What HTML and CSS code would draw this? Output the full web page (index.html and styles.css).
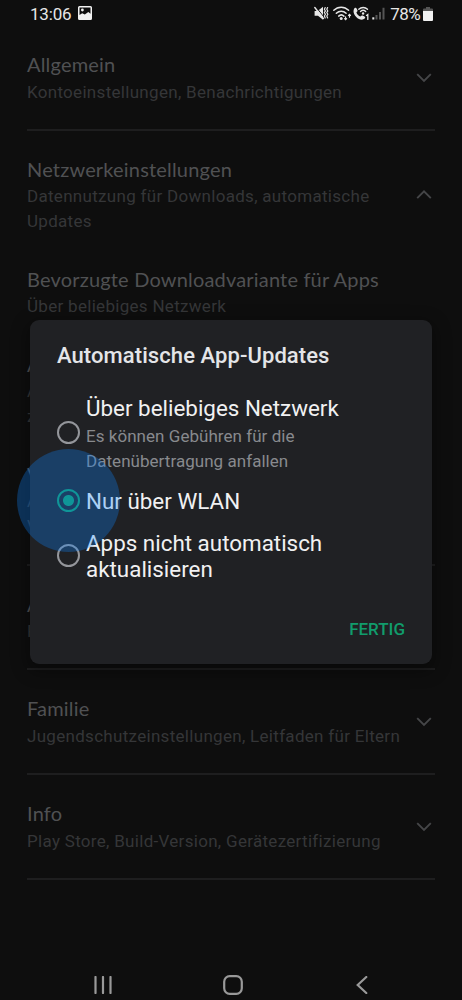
FILE: index.html
```html
<!DOCTYPE html>
<html lang="de">
<head>
<meta charset="utf-8">
<title>Einstellungen</title>
<link rel="stylesheet" href="styles.css">
</head>
<body>
<div class="screen">
  <header class="status">
    <div class="status-left">
      <span class="clock">13:06</span>
      <svg class="shot" width="14" height="14" viewBox="0 0 14 14"><path fill="#f1f1f1" fill-rule="evenodd" d="M1.500 0h11A1.500 1.500 0 0 1 14 1.500v11a1.500 1.500 0 0 1-1.500 1.500h-11A1.500 1.500 0 0 1 0 12.500v-11A1.500 1.500 0 0 1 1.500 0zM1.500 1.500V9l2.700-1.800 2.600 1.300L10.300 6l2.200 1.800V1.500z"/><circle cx="4.400" cy="4" r="1.400" fill="#f1f1f1"/></svg>
    </div>
    <div class="status-right">
      <svg class="status-icons" width="72" height="16" viewBox="0 0 72 16" fill="none" stroke="#e6e6e6" stroke-linecap="round">
        <path d="M.6 5h3L9 .8v13L4 9.800H.6z" fill="#e6e6e6" stroke="none"/>
        <path d="M2 1l7.600 9.600" stroke="#0e0e0e" stroke-width="1"/>
        <path d="M.8 1.500l8.600 11" stroke-width="1.400"/>
        <path d="M11.200 1.500l-.8 1.700 1 1.700-1 1.700 1 1.700-1 1.700.8 2M13.600 1.500l-.8 1.700 1 1.700-1 1.700 1 1.700-1 1.700.8 2" stroke-width="1.200"/>
        <path d="M19.800 4.300c4.200-4.200 10.600-4.200 14.800 0M22.300 7.300c2.900-2.900 7-2.900 9.800 0M24.700 10.100c1.600-1.500 3.700-1.500 5.200 0" stroke-width="1.500"/>
        <circle cx="27.200" cy="12.400" r="1.500" fill="#e6e6e6" stroke="none"/>
        <path d="M31.600 10.800v2.800M30.600 12.600l1 1 1-1M35.500 11.200V8.400M34.500 9.400l1-1 1 1" stroke-width="1.200"/>
        <path d="M40.400 2.300c.9-.8 1.800-.6 2.200.2l.9 1.900c.3.800-.5 1.400-1.100 2 .8 2 2.200 3.400 4.100 4.200.7-.7 1.300-1.300 2.100-1l1.900.9c.8.400 1 1.400.2 2.100-4.200 4.200-14.200-4.200-10.300-10.300z" fill="#e6e6e6" stroke="none"/>
        <path d="M44.800 3.300c2.500-2.500 6.300-2.500 8.700 0M46.500 5.500c1.600-1.400 3.700-1.400 5.200 0" stroke-width="1.400"/>
        <circle cx="49.100" cy="7.500" r="1.200" fill="#e6e6e6" stroke="none"/>
        <path d="M52.500 9.500l1.300-.9v4.800" stroke-width="1.300"/>
        <path d="M59.300 11.300v2.200" stroke-width="2" stroke-linecap="butt"/>
        <path d="M62.500 9v4.500M66 6v7.500M69.500 1.800v11.700" stroke="#555" stroke-width="2" stroke-linecap="butt"/>
      </svg>
      <span class="percent">78%</span>
      <svg class="battery" width="10" height="14" viewBox="0 0 10 14"><path d="M3 0h4v1.600h2A1 1 0 0 1 10 2.600V5H0V2.600a1 1 0 0 1 1-1h2z" fill="#555"/><path d="M0 4h10v9a1 1 0 0 1-1 1H1a1 1 0 0 1-1-1z" fill="#f1f1f1"/></svg>
    </div>
  </header>

  <main class="list">
    <section class="group">
      <div class="entry"><h2 class="head">Allgemein</h2><p class="sub">Kontoeinstellungen, Benachrichtigungen</p></div>
      <svg class="chevron" width="16" height="10" viewBox="0 0 16 10"><path d="M1.200 1.200L8 8l6.800-6.800"/></svg>
    </section>
    <section class="group group-open">
      <div class="toggle">
        <div class="entry"><h2 class="head">Netzwerkeinstellungen</h2><p class="sub">Datennutzung für Downloads, automatische<br>Updates</p></div>
        <svg class="chevron" width="16" height="10" viewBox="0 0 16 10"><path d="M1.200 8.200L8 1.400l6.800 6.800"/></svg>
      </div>
      <div class="entry"><h2 class="head">Bevorzugte Downloadvariante für Apps</h2><p class="sub">Über beliebiges Netzwerk</p></div>
      <div class="entry"><h2 class="head">A</h2><p class="sub">A<br>z</p></div>
      <div class="entry"><h2 class="head">V</h2><p class="sub">A<br>V</p></div>
    </section>
    <section class="group">
      <div class="entry"><h2 class="head">A</h2><p class="sub">F</p></div>
    </section>
    <section class="group">
      <div class="entry"><h2 class="head">Familie</h2><p class="sub">Jugendschutzeinstellungen, Leitfaden für Eltern</p></div>
      <svg class="chevron" width="16" height="10" viewBox="0 0 16 10"><path d="M1.200 1.200L8 8l6.800-6.800"/></svg>
    </section>
    <section class="group">
      <div class="entry"><h2 class="head">Info</h2><p class="sub">Play Store, Build-Version, Gerätezertifizierung</p></div>
      <svg class="chevron" width="16" height="10" viewBox="0 0 16 10"><path d="M1.200 1.200L8 8l6.800-6.800"/></svg>
    </section>
  </main>

  <nav class="navbar">
    <svg width="18" height="18" viewBox="0 0 18 18"><path d="M1.500 1v16M9 1v16M16.500 1v16"/></svg>
    <svg class="home" width="20" height="20" viewBox="0 0 20 20"><rect x="1.200" y="1.200" width="17.600" height="17.600" rx="5.500"/></svg>
    <svg width="12" height="18" viewBox="0 0 12 18"><path d="M10.300 1L1.700 9l8.600 8"/></svg>
  </nav>

  <div class="dialog" role="dialog">
    <h1 class="title">Automatische App-Updates</h1>
    <div class="options">
      <div class="option opt-a">
        <span class="radio"></span>
        <div class="label"><p class="name">Über beliebiges Netzwerk</p><p class="hint">Es können Gebühren für die<br>Datenübertragung anfallen</p></div>
      </div>
      <div class="option opt-b">
        <span class="radio checked"></span>
        <div class="label"><p class="name">Nur über WLAN</p></div>
      </div>
      <div class="option opt-c">
        <span class="radio"></span>
        <div class="label"><p class="name">Apps nicht automatisch<br>aktualisieren</p></div>
      </div>
    </div>
    <div class="actions"><span class="done">FERTIG</span></div>
  </div>
  <span class="touch"></span>
</div>
</body>
</html>
```
FILE: styles.css
```css
* { box-sizing: border-box; }
body { margin: 0; background: #0e0e0e; font-family: Roboto, "Liberation Sans", sans-serif; }
h1, h2, p { margin: 0; font-weight: 400; }
svg { display: block; flex: none; }

.screen { position: relative; width: 462px; height: 1000px; overflow: hidden; display: flex; flex-direction: column; }

.status { height: 26px; flex: none; display: flex; justify-content: space-between; padding: 4px 29px 0 30px; color: #e6e6e6; font-size: 17px; line-height: 20px; }
.status-left, .status-right { display: flex; align-items: flex-start; }
.clock { letter-spacing: -0.2px; }
.shot { margin: 2px 0 0 7px; }
.status-icons { margin: 2px 4px 0 0; }
.percent { letter-spacing: -0.6px; }
.battery { margin: 3px 0 0 3px; }

.list { flex: 1; padding: 0 27px; }
.group { display: flex; justify-content: space-between; align-items: center; padding: 25px 0 24.300px; border-bottom: 2px solid #1e1e1f; }
.group-open { display: flex; flex-direction: column; align-items: stretch; gap: 31.500px; }
.toggle { display: flex; justify-content: space-between; align-items: center; }
.head { margin-bottom: 2px; font-family: Lato, Roboto, sans-serif; font-size: 20px; line-height: 26.500px; letter-spacing: 0.180px; color: #505153; white-space: nowrap; }
.sub { font-size: 17px; line-height: 25px; letter-spacing: 0.300px; color: #353638; white-space: nowrap; }
.chevron { margin-right: 3px; fill: none; stroke: #454648; stroke-width: 1.900; }

.navbar { height: 30px; flex: none; display: flex; justify-content: space-between; align-items: center; padding: 0 94px; }
.navbar svg { fill: none; stroke: #999; stroke-width: 2.200; stroke-linecap: round; }
.navbar .home { margin-right: 3px; }

.dialog { position: absolute; left: 30px; top: 320px; width: 402px; height: 344px; padding: 22px 27px 21px; border-radius: 9px; background: #202124; box-shadow: 0 5px 16px 3px rgba(0, 0, 0, 0.350); display: flex; flex-direction: column; }
.title { font-size: 22px; line-height: 28px; font-weight: 500; letter-spacing: 0.080px; color: #e4e5e8; white-space: nowrap; }
.options { padding-top: 25px; }
.option { display: flex; align-items: center; gap: 6px; }
.radio { flex: none; width: 23px; height: 23px; margin-bottom: 1px; border: 2px solid #94969b; border-radius: 50%; }
.opt-a .radio { margin-bottom: 5px; }
.checked { border-color: #119c6c; background: radial-gradient(circle, #119c6c 5px, transparent 6px); }
.name { font-size: 22.400px; line-height: 26px; color: #f1f1f2; white-space: nowrap; }
.hint { margin-top: 3px; font-size: 17px; line-height: 25px; letter-spacing: 0.040px; color: #888a8e; white-space: nowrap; }
.opt-a { height: 79px; }
.opt-b { margin-top: 14px; }
.opt-c { margin-top: 16px; }
.actions { display: flex; justify-content: flex-end; margin-top: auto; }
.done { font-size: 17px; line-height: 28px; font-weight: 500; color: #119c6c; }

.touch { position: absolute; left: 16.500px; top: 448.500px; width: 103px; height: 103px; border-radius: 50%; background: rgba(12, 133, 255, 0.300); }
```
